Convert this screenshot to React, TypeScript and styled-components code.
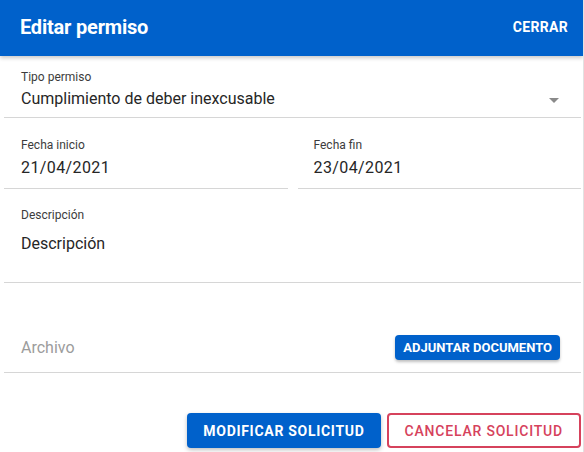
import React from 'react';
import styled, { createGlobalStyle } from 'styled-components';

const GlobalStyle = createGlobalStyle`
    body {
        margin: 0;
        background: #ffffff;
        font-family: Roboto, 'Liberation Sans', sans-serif;
    }
`;

const Dialog = styled.div`
    width: 584px;
    height: 452px;
    box-sizing: border-box;
    border-right: 1px solid #e2e2e2;
    background: #ffffff;
    overflow: hidden;
`;

const Header = styled.header`
    height: 56px;
    background: #0061cb;
    display: flex;
    align-items: center;
    justify-content: space-between;
    padding: 0 15px 0 20px;
    box-shadow: 0 2px 4px rgba(0, 0, 0, 0.22);
    position: relative;
`;

const Title = styled.h1`
    margin: 0;
    color: #ffffff;
    font-size: 20px;
    font-weight: 700;
    letter-spacing: -0.2px;
    padding-bottom: 2px;
`;

const CloseButton = styled.button`
    background: none;
    border: none;
    padding: 0;
    color: #ffffff;
    font-family: inherit;
    font-size: 14px;
    font-weight: 700;
    letter-spacing: 0.3px;
    cursor: pointer;
    margin-bottom: 2px;
`;

const Content = styled.div`
    padding: 0 2px 0 4px;
`;

const Field = styled.div<{ $top: number; $bottom: number; $gap: number; $inset?: number }>`
    margin-top: ${(p) => p.$top}px;
    padding: 0 0 ${(p) => p.$bottom}px ${(p) => p.$inset ?? 17}px;
    border-bottom: 1px solid #d6d6d6;
    display: flex;
    flex-direction: column;
    gap: ${(p) => p.$gap}px;
    position: relative;
    min-width: 0;
`;

const Label = styled.label`
    font-size: 12px;
    line-height: 14px;
    color: #3c3c3c;
`;

const Value = styled.div`
    font-size: 16px;
    line-height: 19px;
    color: #262626;
`;

const DateValue = styled(Value)`
    letter-spacing: 0.4px;
`;

const Caret = styled.span`
    position: absolute;
    right: 22px;
    top: 28px;
    width: 0;
    height: 0;
    border-left: 5px solid transparent;
    border-right: 5px solid transparent;
    border-top: 5px solid #8a8a8a;
`;

const Row = styled.div`
    display: grid;
    grid-template-columns: 1fr 1fr;
    gap: 10px;
`;

const FileRow = styled.div`
    margin-top: 52px;
    padding: 0 21px 12px 17px;
    border-bottom: 1px solid #d6d6d6;
    display: flex;
    align-items: center;
    justify-content: space-between;
`;

const Placeholder = styled.span`
    font-size: 16px;
    color: #9c9c9c;
`;

const SmallButton = styled.button`
    height: 25px;
    padding: 0 8px;
    background: #0061cb;
    color: #ffffff;
    border: none;
    border-radius: 4px;
    font-family: inherit;
    font-size: 13px;
    font-weight: 700;
    letter-spacing: 0;
    box-shadow: 0 2px 3px rgba(0, 0, 0, 0.25);
`;

const Footer = styled.div`
    margin-top: 40px;
    display: flex;
    justify-content: flex-end;
    gap: 6px;
`;

const Button = styled.button<{ $variant: 'primary' | 'danger' }>`
    height: 35px;
    box-sizing: border-box;
    padding: 0 16px;
    border-radius: 4px;
    font-family: inherit;
    font-size: 14px;
    letter-spacing: ${(p) => (p.$variant === 'primary' ? '0.7px' : '0.8px')};
    font-weight: ${(p) => (p.$variant === 'primary' ? 700 : 500)};
    background: ${(p) => (p.$variant === 'primary' ? '#0061cb' : '#ffffff')};
    color: ${(p) => (p.$variant === 'primary' ? '#ffffff' : '#d6425c')};
    border: ${(p) => (p.$variant === 'primary' ? 'none' : '2px solid #d6425c')};
    box-shadow: ${(p) => (p.$variant === 'primary' ? '0 2px 4px rgba(0, 0, 0, 0.25)' : 'none')};
`;

export default function App() {
    return (
        <>
            <GlobalStyle />
            <Dialog>
                <Header>
                    <Title>Editar permiso</Title>
                    <CloseButton>CERRAR</CloseButton>
                </Header>
                <Content>
                    <Field $top={14} $bottom={9} $gap={5}>
                        <Label>Tipo permiso</Label>
                        <Value>Cumplimiento de deber inexcusable</Value>
                        <Caret />
                    </Field>
                    <Row>
                        <Field $top={20} $bottom={11} $gap={6}>
                            <Label>Fecha inicio</Label>
                            <DateValue>21/04/2021</DateValue>
                        </Field>
                        <Field $top={20} $bottom={11} $gap={6} $inset={16}>
                            <Label>Fecha fin</Label>
                            <DateValue>23/04/2021</DateValue>
                        </Field>
                    </Row>
                    <Field $top={19} $bottom={29} $gap={12}>
                        <Label>Descripción</Label>
                        <Value>Descripción</Value>
                    </Field>
                    <FileRow>
                        <Placeholder>Archivo</Placeholder>
                        <SmallButton>ADJUNTAR DOCUMENTO</SmallButton>
                    </FileRow>
                    <Footer>
                        <Button $variant="primary">MODIFICAR SOLICITUD</Button>
                        <Button $variant="danger">CANCELAR SOLICITUD</Button>
                    </Footer>
                </Content>
            </Dialog>
        </>
    );
}
